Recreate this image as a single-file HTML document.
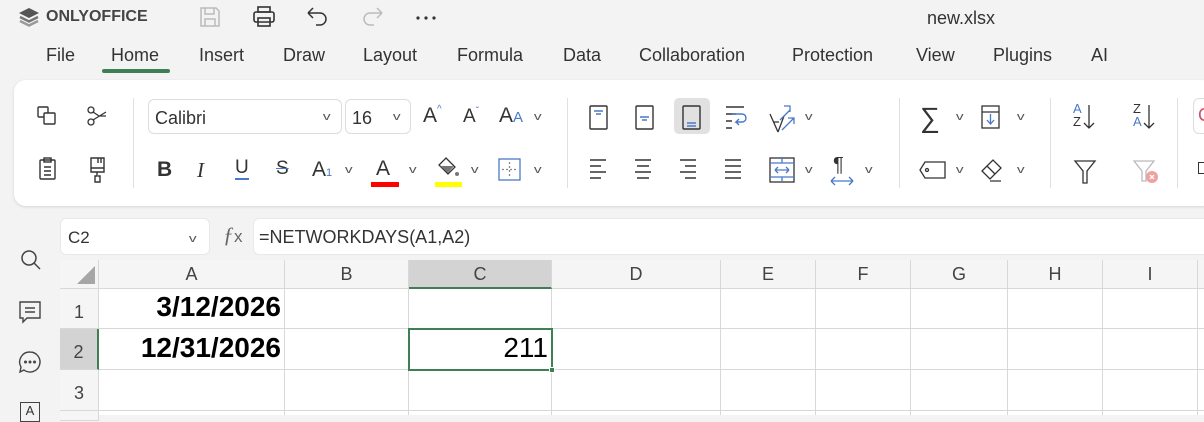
<!DOCTYPE html>
<html><head><meta charset="utf-8"><style>
*{margin:0;padding:0;box-sizing:border-box}
body{width:1204px;height:415px;overflow:hidden;background:#f3f3f3;font-family:"Liberation Sans",sans-serif;position:relative;color:#333}
.a{position:absolute}
.menu span{position:absolute;top:45px;font-size:18px;color:#333}
.card{left:14px;top:80px;width:1200px;height:126px;background:#fff;border-radius:12px;box-shadow:0 1px 3px rgba(0,0,0,.12)}
.sep{position:absolute;width:1px;background:#e0e0e0;top:98px;height:90px}
.chev{position:absolute;font-size:11px;color:#555;transform:scaleX(1.4)}
.box{position:absolute;border:1px solid #ddd;border-radius:6px;background:#fff;font-size:18px;padding:8px 0 0 6px}
.cell{position:absolute;border-right:1px solid #d8d8d8;border-bottom:1px solid #d8d8d8}
.hdr{background:#f5f5f5;text-align:center;font-size:18px;color:#444;line-height:28px}
.rh{background:#f5f5f5;text-align:center;font-size:18px;color:#444}
svg{position:absolute;overflow:visible}
</style></head><body>
<svg class="a" style="left:18px;top:7px" width="22" height="20" viewBox="0 0 22 20"><path d="M11 1 L21 6 L11 11 L1 6Z" fill="#555"/><path d="M2 10 L11 14.5 L20 10" stroke="#777" stroke-width="2.4" fill="none"/><path d="M2 14 L11 18.5 L20 14" stroke="#999" stroke-width="2.4" fill="none"/></svg>
<div class="a" style="left:46px;top:8px;font-size:16px;font-weight:bold;color:#444">ONLYOFFICE</div>
<svg style="left:198px;top:5px" width="24" height="24" viewBox="0 0 24 24" fill="none" stroke="#bbb" stroke-width="1.5"><path d="M3 3h15l3 3v15H3z"/><path d="M7 3v6h9V3M7 21v-7h10v7"/></svg>
<svg style="left:252px;top:6px" width="24" height="22" viewBox="0 0 24 22" fill="none" stroke="#333" stroke-width="1.6"><rect x="6" y="1" width="12" height="5"/><rect x="2" y="6" width="20" height="10" rx="2"/><rect x="6" y="12" width="12" height="8"/></svg>
<svg style="left:306px;top:6px" width="24" height="22" viewBox="0 0 24 22" fill="none" stroke="#333" stroke-width="1.5"><path d="M2 7h12a6 6 0 0 1 0 12H10M2 7l5-5M2 7l5 5"/></svg>
<svg style="left:360px;top:6px" width="24" height="22" viewBox="0 0 24 22" fill="none" stroke="#bbb" stroke-width="1.5"><path d="M22 7H10a6 6 0 0 0 0 12h4M22 7l-5-5M22 7l-5 5"/></svg>
<svg style="left:416px;top:16px" width="20" height="4" viewBox="0 0 20 4" fill="#333"><circle cx="2" cy="2" r="1.6"/><circle cx="10" cy="2" r="1.6"/><circle cx="18" cy="2" r="1.6"/></svg>
<div class="a" style="left:927px;top:8px;font-size:18px;color:#333">new.xlsx</div>
<div class="menu">
<span style="left:46px">File</span><span style="left:111px">Home</span><span style="left:199px">Insert</span><span style="left:283px">Draw</span><span style="left:363px">Layout</span><span style="left:457px">Formula</span><span style="left:563px">Data</span><span style="left:639px">Collaboration</span><span style="left:792px">Protection</span><span style="left:916px">View</span><span style="left:993px">Plugins</span><span style="left:1091px">AI</span>
</div>
<div class="a" style="left:102px;top:69px;width:68px;height:4px;border-radius:2px;background:#3f7f55"></div>
<div class="a card"></div>
<svg style="left:36px;top:105px" width="22" height="22" viewBox="0 0 22 22" fill="none" stroke="#333" stroke-width="1.4"><rect x="2" y="2" width="10" height="10" rx="1"/><rect x="8" y="8" width="11" height="11" rx="1" fill="#fff"/></svg>
<svg style="left:86px;top:105px" width="22" height="22" viewBox="0 0 22 22" fill="none" stroke="#333" stroke-width="1.3"><circle cx="5" cy="5" r="3"/><circle cx="5" cy="17" r="3"/><path d="M7 7l6 4M7 15l13-8M13 11h7"/></svg>
<svg style="left:38px;top:157px" width="20" height="24" viewBox="0 0 20 24" fill="none" stroke="#333" stroke-width="1.4"><rect x="2" y="3" width="15" height="19" rx="1"/><rect x="6" y="1" width="7" height="4"/><path d="M6 10h7M6 14h7M6 18h7"/></svg>
<svg style="left:88px;top:156px" width="20" height="28" viewBox="0 0 20 28" fill="none" stroke="#333" stroke-width="1.4"><path d="M3 2h13v14H3zM3 12h13M9 16v4h-2v6h5v-6h-2M10 2v5M13 2v5"/></svg>
<div class="sep" style="left:133px"></div>
<div class="box" style="left:148px;top:99px;width:194px;height:35px">Calibri</div><div class="chev" style="left:324px;top:111px">v</div>
<div class="box" style="left:345px;top:99px;width:66px;height:35px">16</div><div class="chev" style="left:394px;top:111px">v</div>
<div class="a" style="left:423px;top:104px;font-size:21px;color:#333">A<span style="font-size:10px;color:#4a78c8;vertical-align:top">^</span></div>
<div class="a" style="left:463px;top:106px;font-size:19px;color:#333">A<span style="font-size:10px;color:#4a78c8;vertical-align:top">ˇ</span></div>
<div class="a" style="left:499px;top:104px;font-size:21px;color:#333">A<span style="font-size:15px;color:#4a78c8">A</span></div><div class="chev" style="left:535px;top:111px">v</div>
<div class="a" style="left:157px;top:158px;font-size:21px;font-weight:bold;color:#333">B</div>
<div class="a" style="left:197px;top:158px;font-size:21px;font-style:italic;color:#333;font-family:'Liberation Serif',serif">I</div>
<div class="a" style="left:235px;top:158px;font-size:19px;color:#333;border-bottom:2px solid #4a78c8;line-height:20px">U</div>
<div class="a" style="left:276px;top:158px;font-size:19px;color:#333;text-decoration:line-through;text-decoration-color:#4a78c8">S</div>
<div class="a" style="left:312px;top:158px;font-size:21px;color:#333">A<span style="font-size:11px;color:#4a78c8">1</span></div><div class="chev" style="left:346px;top:164px">v</div>
<div class="a" style="left:376px;top:157px;font-size:21px;color:#333">A</div><div class="a" style="left:371px;top:182px;width:28px;height:5px;background:#f00"></div><div class="chev" style="left:410px;top:164px">v</div>
<svg style="left:436px;top:156px" width="24" height="24" viewBox="0 0 24 24"><path d="M10 2l9 9-7 7-9-9z" fill="none" stroke="#333" stroke-width="1.3"/><path d="M4 10h14l-6 7z" fill="#777"/><circle cx="21" cy="18" r="2" fill="#777"/></svg><div class="a" style="left:435px;top:182px;width:27px;height:5px;background:#ff0"></div><div class="chev" style="left:472px;top:164px">v</div>
<svg style="left:498px;top:158px" width="24" height="24" viewBox="0 0 24 24" fill="none" stroke="#4a78c8" stroke-width="1.3"><rect x="1" y="1" width="21" height="21"/><path d="M11.5 4v15M4 11.5h15" stroke-dasharray="2 2" stroke="#888"/></svg><div class="chev" style="left:535px;top:164px">v</div>
<div class="sep" style="left:567px"></div>
<svg style="left:584px;top:102px" width="160" height="32" viewBox="0 0 160 32" fill="none" stroke-width="1.4"><rect x="6" y="4" width="17" height="23" rx="1" stroke="#333"/><path d="M10 9h9M12 12h5" stroke="#4a78c8"/><rect x="52" y="4" width="17" height="23" rx="1" stroke="#333"/><path d="M56 15h9M58 18h5" stroke="#4a78c8"/><rect x="90" y="-4" width="36" height="36" rx="5" fill="#e1e1e1" stroke="none"/><rect x="99" y="4" width="17" height="23" rx="1" stroke="#333"/><path d="M103 21h9M103 24h9" stroke="#4a78c8"/><path d="M142 5h18M142 12h10M142 19h6M142 26h6" stroke="#333"/><path d="M148 12h10a4 4 0 0 1 0 8h-6l3-3M152 20l3 3" stroke="#4a78c8"/></svg>
<svg style="left:768px;top:102px" width="34" height="34" viewBox="0 0 34 34" fill="none" stroke-width="1.3"><path d="M2 12l8 18M5 20l6 0M10 30l6-16" stroke="#333"/><path d="M12 18l10-10M16 4h6v6M14 28l12-12M20 16h6v6" stroke="#4a78c8"/></svg><div class="chev" style="left:806px;top:111px">v</div>
<svg style="left:588px;top:158px" width="160" height="24" viewBox="0 0 160 24" fill="none" stroke="#333" stroke-width="1.4"><path d="M2 2h16M2 8h11M2 14h16M2 20h11M47 2h16M49 8h12M47 14h16M49 20h12M92 2h16M97 8h11M92 14h16M97 20h11M137 2h16M137 8h16M137 14h16M137 20h16"/></svg>
<svg style="left:768px;top:156px" width="28" height="28" viewBox="0 0 28 28" fill="none" stroke-width="1.3"><rect x="2" y="2" width="24" height="24" stroke="#333"/><path d="M2 7h24M2 21h24M14 21v5M14 2v5" stroke="#4a78c8"/><path d="M7 14h14M7 14l3-3M7 14l3 3M21 14l-3-3M21 14l-3 3" stroke="#4a78c8"/></svg><div class="chev" style="left:806px;top:164px">v</div>
<div class="a" style="left:833px;top:154px;font-size:20px;color:#333">¶</div>
<svg style="left:830px;top:176px" width="24" height="10" viewBox="0 0 24 10" fill="none" stroke="#4a78c8" stroke-width="1.3"><path d="M1 5h22M1 5l4-4M1 5l4 4M23 5l-4-4M23 5l-4 4"/></svg><div class="chev" style="left:866px;top:164px">v</div>
<div class="sep" style="left:899px"></div>
<div class="a" style="left:920px;top:101px;font-size:28px;color:#333;font-family:'DejaVu Sans',sans-serif;font-weight:200">∑</div><div class="chev" style="left:957px;top:111px">v</div>
<svg style="left:980px;top:104px" width="22" height="26" viewBox="0 0 22 26" fill="none" stroke-width="1.3"><rect x="2" y="2" width="17" height="22" stroke="#333"/><path d="M2 8h17" stroke="#333"/><path d="M10.5 10v10M7 16l3.5 4 3.5-4" stroke="#4a78c8"/></svg><div class="chev" style="left:1018px;top:111px">v</div>
<svg style="left:918px;top:160px" width="30" height="20" viewBox="0 0 30 20" fill="none" stroke="#333" stroke-width="1.3"><path d="M7 2h20v16H7L2 10z"/><circle cx="9" cy="10" r="1.5"/></svg><div class="chev" style="left:957px;top:164px">v</div>
<svg style="left:980px;top:157px" width="26" height="26" viewBox="0 0 26 26" fill="none" stroke="#333" stroke-width="1.3"><path d="M2 14l11-11 8 8-11 11zM7 9l8 8M10 24h11"/></svg><div class="chev" style="left:1018px;top:164px">v</div>
<div class="sep" style="left:1050px"></div>
<div class="a" style="left:1073px;top:102px;font-size:13px;line-height:13px;color:#4a78c8">A<br><span style="color:#333">Z</span></div><svg style="left:1083px;top:104px" width="12" height="26" viewBox="0 0 12 26" fill="none" stroke="#333" stroke-width="1.3"><path d="M6 1v23M1 19l5 5 5-5"/></svg>
<div class="a" style="left:1133px;top:102px;font-size:13px;line-height:13px;color:#333">Z<br><span style="color:#4a78c8">A</span></div><svg style="left:1143px;top:104px" width="12" height="26" viewBox="0 0 12 26" fill="none" stroke="#333" stroke-width="1.3"><path d="M6 1v23M1 19l5 5 5-5"/></svg>
<svg style="left:1073px;top:159px" width="24" height="26" viewBox="0 0 24 26" fill="none" stroke="#333" stroke-width="1.3"><path d="M2 2h20l-8 10v12h-4V12z"/></svg>
<svg style="left:1132px;top:159px" width="30" height="26" viewBox="0 0 30 26" fill="none" stroke="#bbb" stroke-width="1.3"><path d="M2 2h20l-8 10v10h-4V12z"/><circle cx="20" cy="18" r="6" fill="#f0a0a0" stroke="none"/><path d="M18 16l4 4M22 16l-4 4" stroke="#fff"/></svg>
<div class="sep" style="left:1177px"></div>
<div class="box" style="left:1193px;top:98px;width:40px;height:36px;padding:6px 0 0 4px;color:#c56;">C</div>
<div class="a" style="left:1198px;top:162px;width:10px;height:12px;border:1.5px solid #333"></div>
<div class="box" style="left:60px;top:218px;width:150px;height:37px;border-color:#e8e8e8;font-size:17px;padding:9px 0 0 7px">C2</div><div class="chev" style="left:190px;top:233px">v</div>
<div class="a" style="left:223px;top:222px;font-size:22px;font-style:italic;color:#666;font-family:'Liberation Serif',serif">ƒ<span style="font-style:normal;font-size:17px;font-family:'Liberation Sans'">x</span></div>
<div class="box" style="left:253px;top:218px;width:960px;height:37px;border-color:#e8e8e8;font-size:18px;padding:8px 0 0 5px">=NETWORKDAYS(A1,A2)</div>
<svg style="left:19px;top:248px" width="24" height="24" viewBox="0 0 24 24" fill="none" stroke="#444" stroke-width="1.5"><circle cx="10" cy="10" r="7"/><path d="M15 15l6 6"/></svg>
<svg style="left:18px;top:300px" width="24" height="26" viewBox="0 0 24 26" fill="none" stroke="#444" stroke-width="1.4"><path d="M2 2h20v16H9l-4 4v-4H2z"/><path d="M7 8h10M7 12h10"/></svg>
<svg style="left:18px;top:350px" width="24" height="26" viewBox="0 0 24 26" fill="none" stroke="#444" stroke-width="1.4"><path d="M12 2a10 10 0 1 1-6 18l-4 2 1-5A10 10 0 0 1 12 2z"/><circle cx="7.5" cy="12" r=".8"/><circle cx="12" cy="12" r=".8"/><circle cx="16.5" cy="12" r=".8"/></svg>
<div class="a" style="left:20px;top:402px;width:20px;height:20px;border:1.5px solid #444;font-size:13px;text-align:center">A</div>
<div class="a" style="left:60px;top:260px;width:1144px;height:155px;background:#fff"></div>
<div class="cell hdr" style="left:60px;top:260px;width:39px;height:29px"></div>
<svg style="left:76px;top:265px" width="20" height="20" viewBox="0 0 20 20"><path d="M19 1V19H1z" fill="#a6a6a6"/></svg>
<div class="cell hdr" style="left:99px;top:260px;width:186px;height:29px">A</div>
<div class="cell hdr" style="left:285px;top:260px;width:124px;height:29px">B</div>
<div class="cell hdr" style="left:409px;top:260px;width:143px;height:29px;background:#d3d3d3;border-bottom:2px solid #3f7f55">C</div>
<div class="cell hdr" style="left:552px;top:260px;width:169px;height:29px">D</div>
<div class="cell hdr" style="left:721px;top:260px;width:95px;height:29px">E</div>
<div class="cell hdr" style="left:816px;top:260px;width:95px;height:29px">F</div>
<div class="cell hdr" style="left:911px;top:260px;width:97px;height:29px">G</div>
<div class="cell hdr" style="left:1008px;top:260px;width:95px;height:29px">H</div>
<div class="cell hdr" style="left:1103px;top:260px;width:95px;height:29px">I</div>
<div class="cell hdr" style="left:1198px;top:260px;width:20px;height:29px"></div>
<div class="cell rh" style="left:60px;top:289px;width:39px;height:40px;line-height:46px">1</div>
<div class="cell rh" style="left:60px;top:329px;width:39px;height:41px;line-height:46px;background:#d3d3d3;border-right:2px solid #3f7f55">2</div>
<div class="cell rh" style="left:60px;top:370px;width:39px;height:41px;line-height:46px">3</div>
<div class="cell rh" style="left:60px;top:411px;width:39px;height:10px"></div>
<svg style="left:99px;top:289px" width="1105" height="126"><g stroke="#d8d8d8" stroke-width="1"><path d="M185.5 0V126M309.5 0V126M452.5 0V126M621.5 0V126M716.5 0V126M811.5 0V126M908.5 0V126M1003.5 0V126M1098.5 0V126M0 39.5H1105M0 80.5H1105M0 121.5H1105"/></g></svg>
<div class="a" style="left:99px;top:291px;width:182px;text-align:right;font-size:28px;font-weight:bold;color:#000">3/12/2026</div>
<div class="a" style="left:99px;top:332px;width:182px;text-align:right;font-size:28px;font-weight:bold;color:#000">12/31/2026</div>
<div class="a" style="left:408px;top:328px;width:145px;height:43px;border:2px solid #3f7f55"></div>
<div class="a" style="left:549px;top:367px;width:6px;height:6px;background:#3f7f55;border:1px solid #fff"></div>
<div class="a" style="left:410px;top:332px;width:138px;text-align:right;font-size:28px;color:#000">211</div>
</body></html>
